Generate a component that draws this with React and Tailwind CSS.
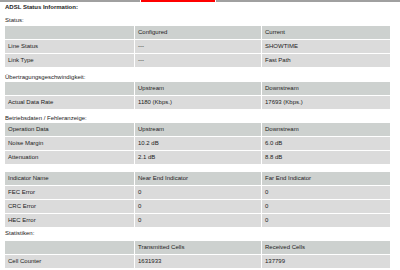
import React from 'react';

const sections = [
  {
    label: 'Status:',
    labelClass: 'mt-[3px]',
    tableClass: 'mt-[1px]',
    head: ['', 'Configured', 'Current'],
    rows: [
      ['Line Status', '---', 'SHOWTIME'],
      ['Link Type', '---', 'Fast Path'],
    ],
  },
  {
    label: 'Übertragungsgeschwindigkeit:',
    labelClass: 'mt-[5px]',
    tableClass: 'mt-0',
    head: ['', 'Upstream', 'Downstream'],
    rows: [['Actual Data Rate', '1180 (Kbps.)', '17693 (Kbps.)']],
  },
  {
    label: 'Betriebsdaten / Fehleranzeige:',
    labelClass: 'mt-[4px]',
    tableClass: 'mt-0',
    head: ['Operation Data', 'Upstream', 'Downstream'],
    rows: [
      ['Noise Margin', '10.2 dB', '6.0 dB'],
      ['Attenuation', '2.1 dB', '8.8 dB'],
    ],
  },
  {
    label: null,
    tableClass: 'mt-[8px]',
    head: ['Indicator Name', 'Near End Indicator', 'Far End Indicator'],
    rows: [
      ['FEC Error', '0', '0'],
      ['CRC Error', '0', '0'],
      ['HEC Error', '0', '0'],
    ],
  },
  {
    label: 'Statistiken:',
    labelClass: 'mt-[1px]',
    tableClass: 'mt-[3px]',
    head: ['', 'Transmitted Cells', 'Received Cells'],
    rows: [['Cell Counter', '1631933', '137799']],
  },
];

const Row = ({ cells, head }) => (
  <>
    {cells.map((c, i) => (
      <div
        key={i}
        className={`h-[13px] flex items-center pl-[3px] ${head ? 'bg-[#cdd1cf]' : 'bg-[#dbdbdb]'}`}
      >
        {c}
      </div>
    ))}
  </>
);

export default function App() {
  return (
    <div
      className="w-[400px] h-[270px] overflow-hidden bg-white text-[#222] text-[6px]"
      style={{ fontFamily: '"Liberation Sans", Arial, sans-serif' }}
    >
      {/* top nav strip */}
      <div className="flex h-[2px] gap-px">
        <div className="w-[140px] bg-[#a0a0a0]" />
        <div className="w-[74px] bg-[#ff0000]" />
        <div className="flex-1 bg-[#a0a0a0]" />
      </div>

      <div className="h-[10px] leading-[10px] pl-[5px] font-bold">ADSL Status Information:</div>

      {sections.map((s, idx) => (
        <div key={idx}>
          {s.label && (
            <div className={`h-[10px] leading-[10px] pl-[5px] ${s.labelClass}`}>{s.label}</div>
          )}
          <div className={`ml-[5px] w-[385px] grid grid-cols-[129px_126px_128px] gap-px ${s.tableClass}`}>
            <Row cells={s.head} head />
            {s.rows.map((r, j) => (
              <Row key={j} cells={r} />
            ))}
          </div>
        </div>
      ))}
    </div>
  );
}
